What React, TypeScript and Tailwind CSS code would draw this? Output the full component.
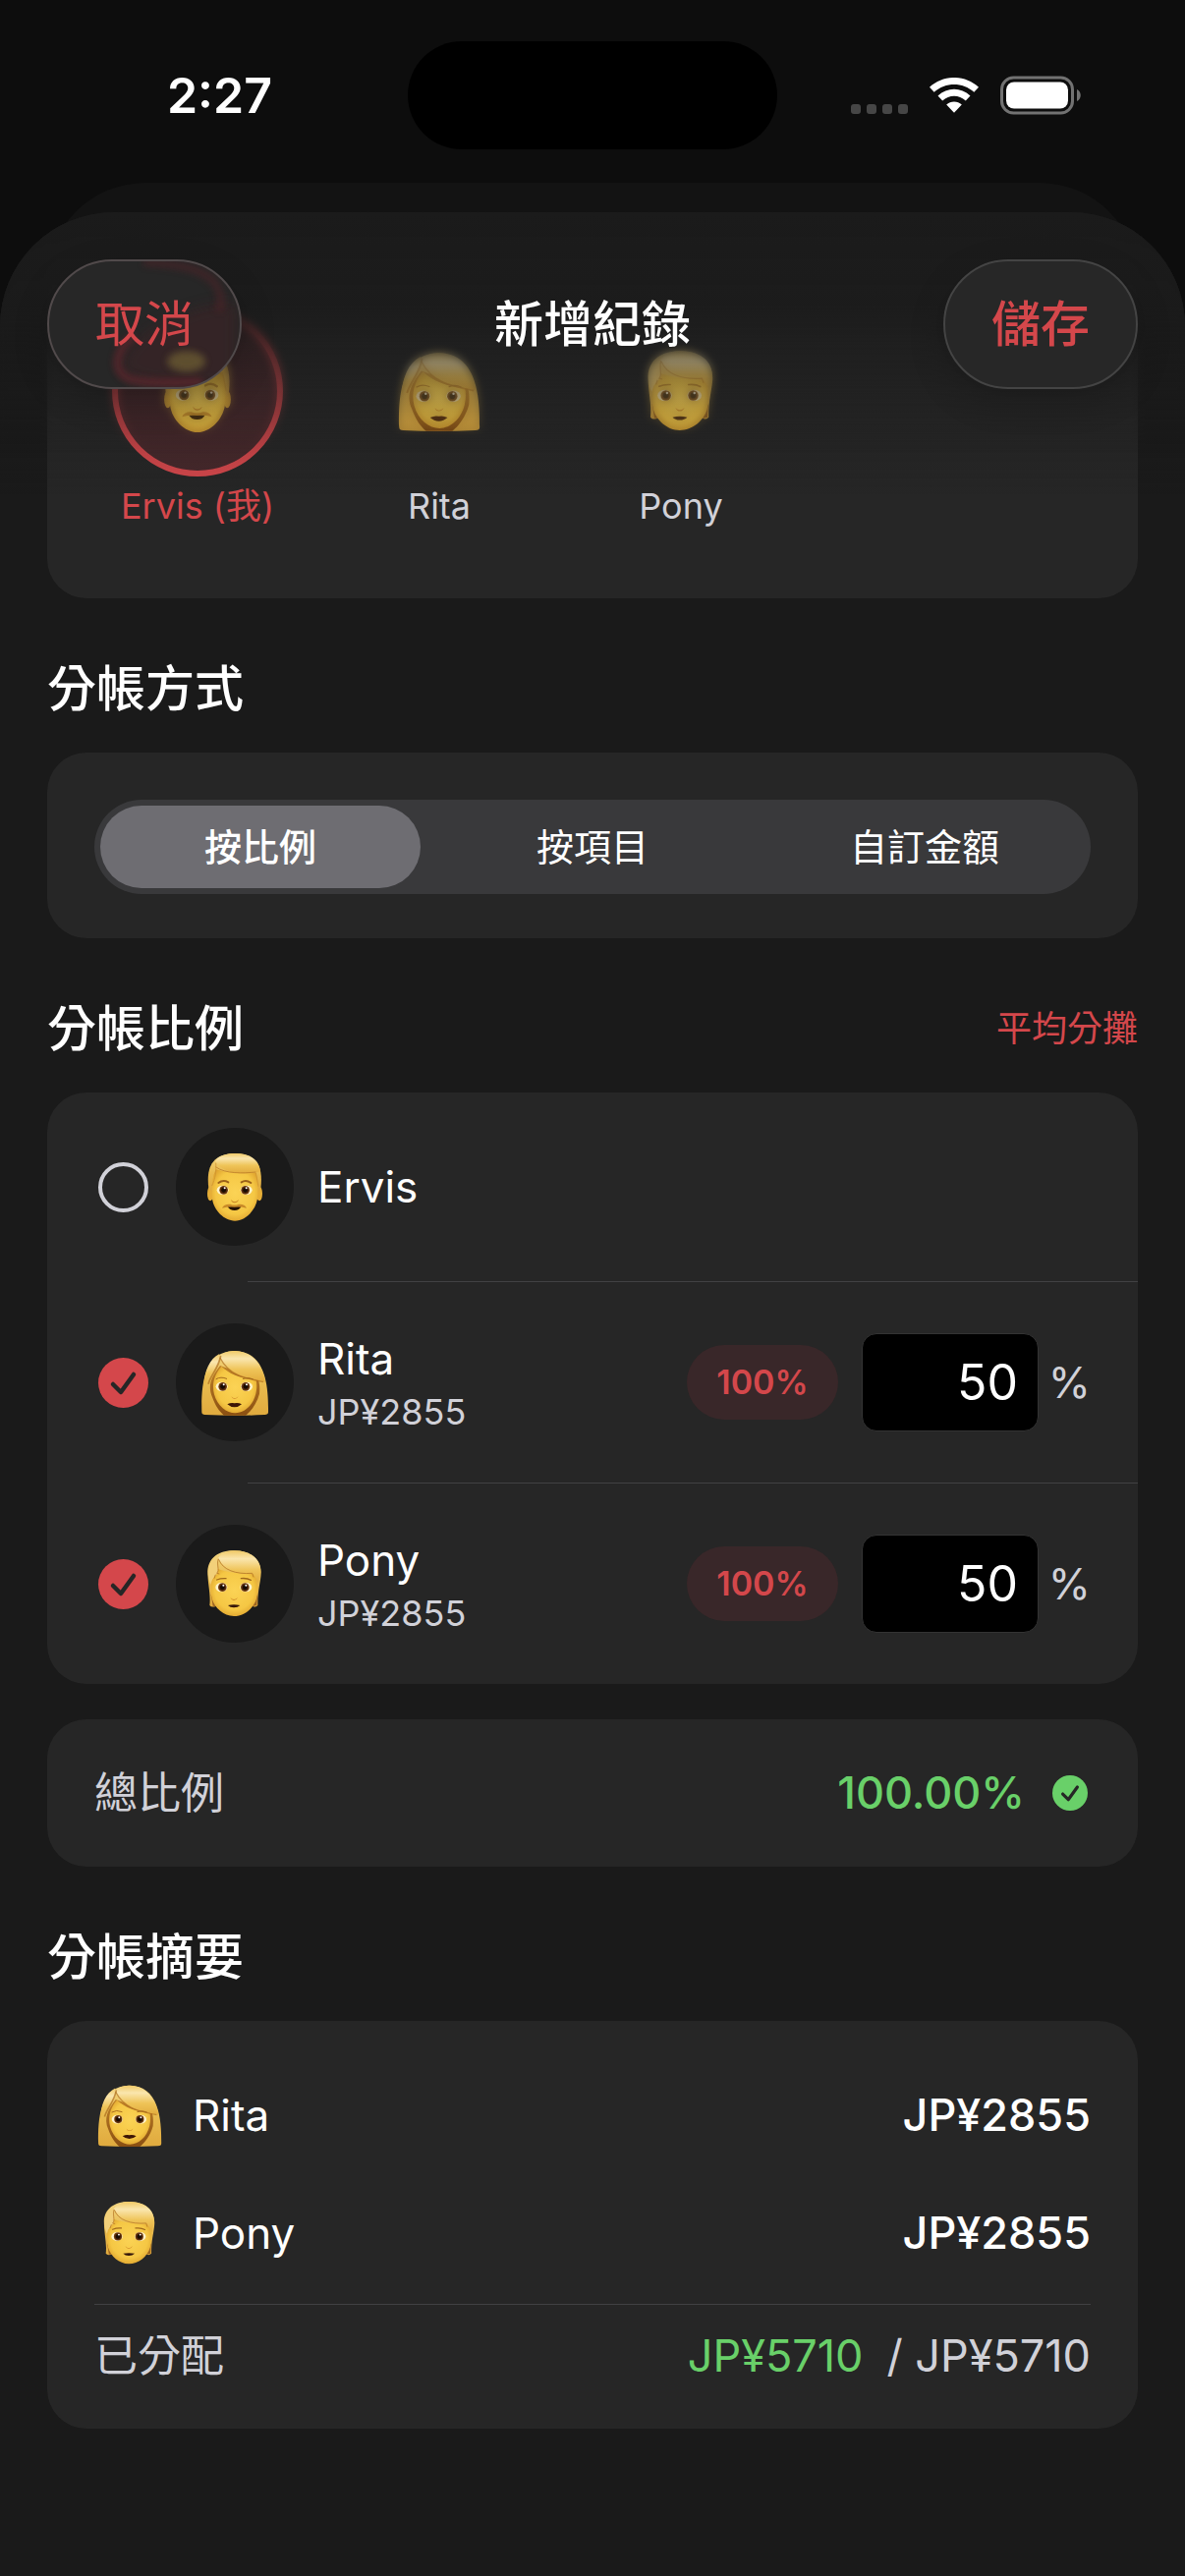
import React, { useState } from "react";

/* ---------- Faces ---------- */

type FaceKind = "man" | "woman" | "person";

function Eyes({ id, lx, rx, y }: { id: string; lx: number; rx: number; y: number }) {
  return (
    <>
      {[lx, rx].map((x, i) => (
        <g key={i}>
          <ellipse cx={x + (i === 0 ? -3 : 3)} cy={y} rx="18" ry="14" fill="#fff3cc" />
          <circle cx={x} cy={y} r="13" fill={`url(#${id}-iris)`} />
          <circle cx={x} cy={y} r="7" fill="#170a02" />
          <circle cx={x + 3} cy={y - 6} r="3" fill="#fff" />
        </g>
      ))}
    </>
  );
}

function Defs({ id }: { id: string }) {
  return (
    <defs>
      <radialGradient id={`${id}-skin`} cx="0.5" cy="0.45" r="0.6">
        <stop offset="0" stopColor="#fbd355" />
        <stop offset="0.7" stopColor="#f5c744" />
        <stop offset="1" stopColor="#dc9f2c" />
      </radialGradient>
      <linearGradient id={`${id}-hair`} x1="0" y1="0" x2="0" y2="1">
        <stop offset="0" stopColor="#f0c966" />
        <stop offset="0.25" stopColor="#fae6ae" />
        <stop offset="0.6" stopColor="#efc458" />
        <stop offset="1" stopColor="#e2ab3c" />
      </linearGradient>
      <linearGradient id={`${id}-side`} x1="0" y1="0" x2="0" y2="1">
        <stop offset="0" stopColor="#f3d683" />
        <stop offset="0.5" stopColor="#e9bb4e" />
        <stop offset="1" stopColor="#e0aa3e" />
      </linearGradient>
      <radialGradient id={`${id}-iris`}>
        <stop offset="0" stopColor="#2a1204" />
        <stop offset="0.7" stopColor="#54290b" />
        <stop offset="1" stopColor="#7a4515" />
      </radialGradient>
      <linearGradient id={`${id}-shade`} x1="0" y1="0" x2="0" y2="1">
        <stop offset="0" stopColor="#c08228" />
        <stop offset="1" stopColor="#8a4f12" />
      </linearGradient>
    </defs>
  );
}

function Face({ kind, id, className }: { kind: FaceKind; id: string; className: string }) {
  if (kind === "man") {
    return (
      <svg viewBox="2 31 228 228" className={className} aria-hidden="true">
        <Defs id={id} />
        <ellipse cx="41" cy="166" rx="9" ry="22" fill="#e6ae37" />
        <ellipse cx="191" cy="166" rx="9" ry="22" fill="#e6ae37" />
        <path
          d="M36 150 C30 100 36 44 116 43 C190 43 202 92 195 150 L186 160 L46 160 Z"
          fill={`url(#${id}-side)`}
        />
        <path
          d="M58 92 C100 106 150 104 180 102 C188 124 188 150 185 182 C179 218 148 249 116 249 C84 249 52 218 47 182 C45 150 45 120 58 92 Z"
          fill={`url(#${id}-skin)`}
        />
        <path
          d="M56 68 C66 48 92 43 118 43 C162 43 190 62 194 98 C150 110 84 108 56 68 Z"
          fill={`url(#${id}-hair)`}
        />
        <path d="M57 84 C88 106 140 104 180 100" fill="none" stroke="#b97a25" strokeWidth="3" opacity="0.75" />
        <path d="M58 72 C60 100 56 120 46 142" fill="none" stroke="#cc9030" strokeWidth="3" opacity="0.7" />
        <path d="M180 102 C184 122 186 132 188 144" fill="none" stroke="#cc9030" strokeWidth="3" opacity="0.7" />
        <path d="M66 133 Q80 122 96 131" fill="none" stroke="#9b6119" strokeWidth="6" strokeLinecap="round" />
        <path d="M136 131 Q150 122 165 133" fill="none" stroke="#9b6119" strokeWidth="6" strokeLinecap="round" />
        <Eyes id={id} lx={82} rx={148} y={155} />
        <path d="M104 184 Q115 198 128 184 Q124 194 115 194 Q107 194 104 184 Z" fill="#c98324" />
        <path d="M94 205 H135 Q130 217 115 217 Q100 217 94 205 Z" fill="#241003" />
        <path d="M77 210 Q82 197 102 198 Q115 203 128 198 Q147 197 152 210 Q134 205 115 207 Q96 205 77 210 Z" fill="#c98a28" />
      </svg>
    );
  }
  if (kind === "woman") {
    return (
      <svg viewBox="15 27 228 228" className={className} aria-hidden="true">
        <Defs id={id} />
        <path
          d="M28 232 C26 150 34 46 128 45 C222 46 232 150 231 232 Q231 240 220 240 Q128 245 38 240 Q28 240 28 232 Z"
          fill={`url(#${id}-side)`}
        />
        <path
          d="M84 90 C60 120 44 150 60 186 C70 214 82 230 96 242 H162 C178 230 196 206 204 176 C206 156 204 140 200 132 Z"
          fill={`url(#${id}-shade)`}
        />
        <path
          d="M88 92 C66 118 58 146 66 178 C76 214 104 235 130 235 C158 235 184 212 193 176 C197 158 196 144 194 134 C150 130 112 116 88 92 Z"
          fill={`url(#${id}-skin)`}
        />
        <path
          d="M82 62 C96 48 114 45 130 45 C180 47 214 86 222 140 C164 128 110 122 82 62 Z"
          fill={`url(#${id}-hair)`}
        />
        <path d="M82 62 C88 100 42 118 34 154 C36 104 52 70 82 54 Z" fill={`url(#${id}-hair)`} />
        <path d="M86 60 C78 100 56 118 48 146" fill="none" stroke="#ad6c1c" strokeWidth="5" opacity="0.7" />
        <path d="M84 66 C110 118 156 128 216 140" fill="none" stroke="#ad6c1c" strokeWidth="4" opacity="0.65" />
        <path d="M72 131 Q86 122 104 130" fill="none" stroke="#a56a1d" strokeWidth="3" strokeLinecap="round" />
        <path d="M154 130 Q170 124 184 131" fill="none" stroke="#a56a1d" strokeWidth="3" strokeLinecap="round" />
        <Eyes id={id} lx={92} rx={162} y={154} />
        <path d="M118 184 Q128 196 140 184 Q136 192 128 192 Q121 192 118 184 Z" fill="#d08a2a" />
        <path d="M106 208 Q118 202 128 205 Q138 202 150 208 Q140 217 128 217 Q116 217 106 208 Z" fill="#3d1606" />
      </svg>
    );
  }
  return (
    <svg viewBox="3 24 228 228" className={className} aria-hidden="true">
      <Defs id={id} />
      <path
        d="M40 204 C44 170 34 140 34 100 C36 58 70 36 116 37 C170 38 198 66 197 106 C196 134 186 160 187 204 Q178 212 172 206 L60 206 Q46 212 40 204 Z"
        fill={`url(#${id}-side)`}
      />
      <path d="M44 170 L62 208 L50 206 Z M186 170 L168 208 L184 204 Z" fill="#9c6420" />
      <path
        d="M62 92 C100 106 140 108 178 104 C188 130 188 160 183 184 C174 214 146 237 114 237 C82 237 56 212 47 184 C42 152 42 124 62 92 Z"
        fill={`url(#${id}-skin)`}
      />
      <path
        d="M66 60 C78 42 98 37 118 37 C168 38 196 64 196 102 C193 116 190 122 188 136 C182 122 178 114 172 108 C126 112 88 100 66 60 Z"
        fill={`url(#${id}-hair)`}
      />
      <path d="M66 56 C44 62 34 84 35 108 C36 122 39 132 44 140 C46 124 56 116 64 106 C70 96 60 76 66 56 Z" fill="#f2d07a" />
      <path d="M68 64 C80 96 120 110 170 106 L174 118" fill="none" stroke="#b27223" strokeWidth="3" opacity="0.75" />
      <path d="M67 62 C60 80 72 96 62 106 L70 108 M58 110 L54 122" fill="none" stroke="#b27223" strokeWidth="3" opacity="0.75" />
      <path d="M62 126 Q74 121 90 122" fill="none" stroke="#a0681c" strokeWidth="4" strokeLinecap="round" />
      <path d="M136 122 Q154 120 166 127" fill="none" stroke="#a0681c" strokeWidth="4" strokeLinecap="round" />
      <Eyes id={id} lx={79} rx={148} y={149} />
      <path d="M103 180 Q114 192 126 180 Q122 189 114 189 Q107 189 103 180 Z" fill="#cf8a2a" />
      <path d="M96 204 Q114 200 133 204 Q126 211 114 211 Q102 211 96 204 Z" fill="#35170a" />
    </svg>
  );
}

/* ---------- Small parts ---------- */

function CheckMark({ className }: { className: string }) {
  return (
    <svg viewBox="0 0 51 51" className={className} aria-hidden="true">
      <path d="M15 27 L23 35 L36 17" fill="none" stroke="#262626" strokeWidth="4.5" strokeLinecap="round" strokeLinejoin="round" />
    </svg>
  );
}

function StatusBar() {
  return (
    <div className="grid h-[186px] grid-cols-[1fr_376px_1fr] items-center pt-2">
      <div className="pl-8 text-center text-[50px] leading-[60px] font-semibold text-white">2:27</div>
      <div className="h-[110px] rounded-full bg-black" />
      <div className="flex h-[40px] items-center justify-center pr-8">
        <div className="mr-[22px] flex gap-[6px] self-end pb-px">
          {[0, 1, 2, 3].map((n) => (
            <span key={n} className="size-[10px] rounded-[3px] bg-[#464646]" />
          ))}
        </div>
        <svg viewBox="0 0 50 36" className="mr-[22px] h-[36px] w-[50px]" aria-hidden="true">
          <path d="M0 9.8 C14 -3.3 36 -3.3 50 9.8 L45.3 14.8 C34 4.3 16 4.3 4.7 14.8 Z" fill="#fff" />
          <path d="M8.5 18.6 C18 9.6 32 9.6 41.5 18.6 L36.8 23.5 C30 17 20 17 13.2 23.5 Z" fill="#fff" />
          <path d="M17.2 27.5 C21.5 23.5 28.5 23.5 32.8 27.5 L25 35.8 Z" fill="#fff" />
        </svg>
        <svg viewBox="0 0 82 40" className="h-[40px] w-[82px]" aria-hidden="true">
          <rect x="1.5" y="2" width="72" height="36" rx="12" fill="none" stroke="#727272" strokeWidth="3" />
          <rect x="6" y="6.5" width="63" height="27" rx="8" fill="#fff" />
          <path d="M78 14 C83 16 83 24 78 26 Z" fill="#727272" />
        </svg>
      </div>
    </div>
  );
}

function GlassGlow() {
  return (
    <svg viewBox="0 0 198 132" className="absolute inset-0 size-full" aria-hidden="true">
      <defs>
        <filter id="glow-soft" x="-20%" y="-20%" width="140%" height="140%">
          <feGaussianBlur stdDeviation="4" />
        </filter>
        <filter id="glow-wide" x="-30%" y="-30%" width="160%" height="160%">
          <feGaussianBlur stdDeviation="7" />
        </filter>
      </defs>
      <path d="M196 44 C160 42 90 66 74 108 C80 130 150 134 196 128 Z" fill="#4a2328" opacity="0.4" filter="url(#glow-wide)" />
      <path d="M98 1 C140 3 168 10 176 28 C181 38 180 44 176 52" fill="none" stroke="#6b2129" strokeWidth="8" opacity="0.35" filter="url(#glow-soft)" />
      <path d="M88 78 C70 90 62 116 84 124 C108 130 140 127 160 127" fill="none" stroke="#8c2530" strokeWidth="8" opacity="0.45" filter="url(#glow-soft)" />
      <ellipse cx="143" cy="105" rx="20" ry="11" fill="#665731" opacity="0.85" filter="url(#glow-soft)" />
    </svg>
  );
}

function NavBar() {
  return (
    <header className="absolute inset-x-0 top-0 z-10 h-[288px] overflow-hidden rounded-t-[116px]">
      <div className="absolute inset-0 mask-b-from-40% mask-b-to-85% backdrop-blur-[4px]" />
      <div className="absolute inset-0 bg-[linear-gradient(to_bottom,#1b1b1b_0%,rgba(27,27,27,0.9)_33%,rgba(27,27,27,0.55)_48%,rgba(27,27,27,0.22)_75%,rgba(27,27,27,0)_100%)]" />
      <div className="relative grid grid-cols-[1fr_auto_1fr] items-center px-12 pt-12">
        <button
          type="button"
          className="relative h-[132px] w-[198px] overflow-hidden rounded-full border-2 border-[#514a4b] bg-[#272727] text-[50px] leading-[60px] text-[#d4474b] shadow-[0_12px_36px_rgba(0,0,0,0.18)]"
        >
          <GlassGlow />
          <span className="relative">取消</span>
        </button>
        <h1 className="text-[50px] leading-[60px] font-medium text-white">新增紀錄</h1>
        <button
          type="button"
          className="h-[132px] w-[198px] justify-self-end rounded-full border-2 border-[#444444] bg-[#272727] text-[50px] leading-[60px] font-medium text-[#d4474b] shadow-[0_12px_36px_rgba(0,0,0,0.18)]"
        >
          儲存
        </button>
      </div>
    </header>
  );
}

function SectionTitle({ children, action }: { children: React.ReactNode; action?: React.ReactNode }) {
  return (
    <div className="flex items-center justify-between pt-[62px] pb-[35px]">
      <h2 className="text-[50px] leading-[60px] font-medium text-white">{children}</h2>
      {action}
    </div>
  );
}

/* ---------- Data ---------- */

const payers: { id: string; label: string; face: FaceKind }[] = [
  { id: "ervis", label: "Ervis (我)", face: "man" },
  { id: "rita", label: "Rita", face: "woman" },
  { id: "pony", label: "Pony", face: "person" },
];

const methods = ["按比例", "按項目", "自訂金額"];

const members: { id: string; name: string; face: FaceKind; on: boolean; amount?: string }[] = [
  { id: "ervis", name: "Ervis", face: "man", on: false },
  { id: "rita", name: "Rita", face: "woman", on: true, amount: "JP¥2855" },
  { id: "pony", name: "Pony", face: "person", on: true, amount: "JP¥2855" },
];

/* ---------- Page ---------- */

export default function App() {
  const [payer, setPayer] = useState("ervis");
  const [method, setMethod] = useState("按比例");

  return (
    <div className="flex min-h-screen flex-col bg-[#0d0d0d] font-['Inter','Noto_Sans_CJK_TC',sans-serif]">
      <StatusBar />
      <div className="mx-12 -mb-[120px] h-[150px] rounded-t-[100px] bg-[#131313]" />

      <main className="relative flex-1 rounded-t-[116px] bg-[#1a1a1a] px-12 pt-6 pb-[150px]">
        <NavBar />

        <section className="flex gap-9 rounded-[40px] bg-[#262626] px-12 pt-[71px] pb-[72px]">
          {payers.map((p) => (
            <button
              key={p.id}
              type="button"
              aria-pressed={payer === p.id}
              onClick={() => setPayer(p.id)}
              className="group flex w-[210px] flex-col items-center gap-2 text-[#d1d1d8] aria-pressed:text-[#d4474b]"
            >
              <span className="flex size-[174px] items-center justify-center rounded-full border-[6px] border-transparent group-aria-pressed:border-[#d4474b] group-aria-pressed:bg-[#46282b]">
                <Face kind={p.face} id={`payer-${p.id}`} className="size-[92px]" />
              </span>
              <span className="text-[36px] leading-[44px]">{p.label}</span>
            </button>
          ))}
        </section>

        <SectionTitle>分帳方式</SectionTitle>
        <section className="rounded-[40px] bg-[#262626] px-12 pt-12 pb-[45px]">
          <fieldset aria-label="分帳方式" className="grid grid-cols-3 rounded-full bg-[#39393b]">
            {methods.map((m) => (
              <label
                key={m}
                className="relative m-[6px] flex h-[84px] items-center justify-center rounded-full text-[38px] leading-[48px] text-white has-checked:bg-[#6e6d72] has-checked:font-medium"
              >
                <input
                  type="radio"
                  name="method"
                  className="absolute inset-0 size-full appearance-none rounded-full"
                  checked={method === m}
                  onChange={() => setMethod(m)}
                />
                {m}
              </label>
            ))}
          </fieldset>
        </section>

        <SectionTitle
          action={
            <button type="button" className="text-[36px] leading-[44px] text-[#d4474b]">
              平均分攤
            </button>
          }
        >
          分帳比例
        </SectionTitle>
        <section className="rounded-[40px] bg-[#262626]">
          {members.map((m, i) => (
            <div key={m.id}>
              {i > 0 && <div className="ml-[204px] h-px bg-[#414143]" />}
              <div className={`flex items-center pr-12 pl-[52px] ${m.on ? "h-[204px]" : "h-[192px]"}`}>
                <span className="relative size-[51px] shrink-0">
                  <input
                    id={`on-${m.id}`}
                    type="checkbox"
                    defaultChecked={m.on}
                    className="peer block size-[51px] appearance-none rounded-full border-4 border-[#d1d1d8] checked:border-0 checked:bg-[#d4474b]"
                  />
                  <CheckMark className="pointer-events-none absolute inset-0 hidden size-full peer-checked:block" />
                </span>
                <span className="ml-7 flex size-[120px] shrink-0 items-center justify-center rounded-full bg-[#1a1a1a]">
                  <Face kind={m.face} id={`member-${m.id}`} className="size-[76px]" />
                </span>
                <div className="ml-6 flex flex-1 flex-col">
                  <label htmlFor={`on-${m.id}`} className="text-[44px] leading-[60px] text-white">
                    {m.name}
                  </label>
                  {m.amount && <span className="text-[36px] leading-[48px] text-[#d1d1d8]">{m.amount}</span>}
                </div>
                {m.on && (
                  <>
                    <span className="flex h-[76px] w-[154px] items-center justify-center rounded-full bg-[#392729] text-[34px] leading-[40px] font-semibold text-[#d4474b]">
                      100%
                    </span>
                    <input
                      type="text"
                      inputMode="decimal"
                      defaultValue="50"
                      aria-label={`${m.name} %`}
                      className="ml-6 h-[100px] w-[180px] rounded-[15px] border border-[#333333] bg-black pr-5 text-right text-[50px] leading-[60px] text-white"
                    />
                    <span className="w-[53px] text-right text-[44px] leading-[60px] text-[#d1d1d8]">%</span>
                  </>
                )}
              </div>
            </div>
          ))}
        </section>

        <section className="mt-9 flex h-[150px] items-center rounded-[40px] bg-[#262626] px-12">
          <span className="flex-1 text-[44px] leading-[60px] text-[#d1d1d8]">總比例</span>
          <span className="text-[45px] leading-[60px] font-medium text-[#69d069]">100.00%</span>
          <span className="mr-[3px] ml-7 size-[36px] rounded-full bg-[#69d069]">
            <CheckMark className="size-full" />
          </span>
        </section>

        <SectionTitle>分帳摘要</SectionTitle>
        <section className="rounded-[40px] bg-[#262626] px-12 pt-9 pb-11">
          <dl>
            {members
              .filter((m) => m.on)
              .map((m) => (
                <div key={m.id} className="flex h-[120px] items-center">
                  <Face kind={m.face} id={`sum-${m.id}`} className="size-[72px]" />
                  <dt className="ml-7 flex-1 text-[44px] leading-[60px] text-white">{m.name}</dt>
                  <dd className="text-[45px] leading-[60px] font-medium text-white">{m.amount}</dd>
                </div>
              ))}
            <div className="mt-3 flex items-center border-t border-[#414143] pt-[22px] leading-[60px] text-[#d1d1d8]">
              <dt className="flex-1 text-[44px]">已分配</dt>
              <dd className="flex gap-6 text-[45px]">
                <span className="text-[#69d069]">JP¥5710</span>
                <span>/ JP¥5710</span>
              </dd>
            </div>
          </dl>
        </section>
      </main>
    </div>
  );
}
